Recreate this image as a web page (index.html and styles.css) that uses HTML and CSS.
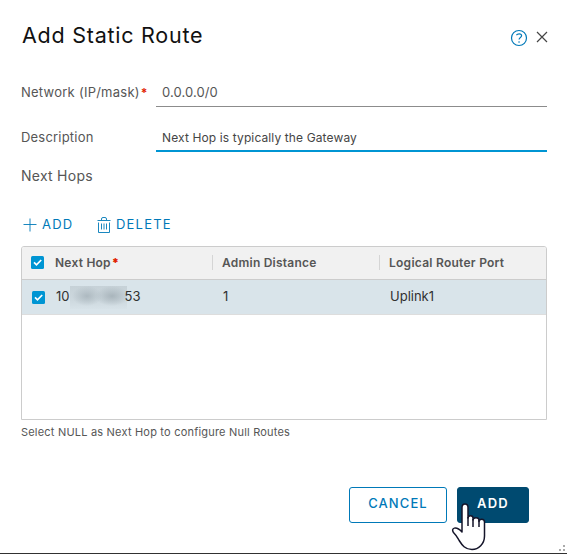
FILE: index.html
```html
<!DOCTYPE html>
<html lang="en">
<head>
<meta charset="utf-8">
<title>Add Static Route</title>
<link rel="stylesheet" href="styles.css">
</head>
<body>
<main class="dialog">
  <header class="header">
    <h1 class="title">Add Static Route</h1>
    <div class="header-icons">
      <svg class="help" width="18" height="18" viewBox="0 0 18 18"><circle cx="9" cy="9" r="7.5"/><path d="M6.4 6.2C7.2 5 8.2 4.8 9.2 4.8c1.5 0 2.4.8 2.4 2 0 1.700-2.500 1.700-2.500 3.700M8.200 13h1.700"/></svg>
      <svg class="close" width="12" height="12" viewBox="0 0 12 12"><path d="M1 1l10 10M11 1L1 11"/></svg>
    </div>
  </header>
  <div class="field">
    <label class="label"><span class="t-network">Network (IP/mask)</span><b class="star">*</b></label>
    <div class="input"><span class="t-ip">0.0.0.0/0</span></div>
  </div>
  <div class="field field-desc">
    <label class="label"><span class="t-desc">Description</span></label>
    <div class="input focused"><span class="t-value">Next Hop is typically the Gateway</span></div>
  </div>
  <h2 class="section"><span class="t-hops">Next Hops</span></h2>
  <div class="toolbar">
    <svg class="plus" width="14" height="14" viewBox="0 0 14 14"><path d="M7 .5v13M.5 6.500h13"/></svg>
    <span class="action t-add">ADD</span>
    <svg class="trash" width="14" height="16" viewBox="0 0 14 16"><path d="M.5 3.500h13M1.500 5.500v10h11v-10M4.500 3V2Q4.500.5 6 .5h2Q9.500.5 9.500 2v1M4.500 6.500v6M7 6.500v6M9.500 6.500v6"/></svg>
    <span class="action t-delete">DELETE</span>
  </div>
  <section class="grid">
    <div class="row head">
      <div class="cell first"><svg class="check" width="13" height="13" viewBox="0 0 13 13"><rect width="13" height="13" rx="1.500"/><path d="M3 6.300l2.500 2.500L10.200 4"/></svg><span class="t-hop">Next Hop</span><b class="star">*</b></div>
      <div class="cell second"><span class="t-admin">Admin Distance</span></div>
      <div class="cell third"><span class="t-port">Logical Router Port</span></div>
    </div>
    <div class="row body">
      <div class="cell first"><svg class="check" width="13" height="13" viewBox="0 0 13 13"><rect width="13" height="13" rx="1.500"/><path d="M3 6.300l2.500 2.500L10.200 4"/></svg><span class="t-ten">10</span><i class="redacted"></i><span class="t-end">53</span></div>
      <div class="cell second"><span>1</span></div>
      <div class="cell third"><span class="t-uplink">Uplink1</span></div>
    </div>
  </section>
  <p class="hint"><span class="t-hint">Select NULL as Next Hop to configure Null Routes</span></p>
  <footer class="footer">
    <button class="btn cancel"><span class="t-cancel">CANCEL</span></button>
    <button class="btn primary"><span class="t-primary">ADD</span></button>
  </footer>
  <svg class="grip" width="7" height="6" viewBox="0 0 7 6"><path d="M4 0h2v2H4zM0 4h2v2H0zM4 4h2v2H4z"/></svg>
  <svg class="pointer" width="38" height="49" viewBox="0 0 38 49"><path d="M11 28V5.500C11 .8 17 .8 17 5.500V16c0-3 5-3 5 0v2c0-3 6-3 6 0v1.500c0-3 5.500-3 5.500.5v14c0 8-6 13.500-12.500 13.500-7 0-10-4.500-12.500-8.500-2.500-4-3.500-6-6-8.500-3-4.500 2.500-7 8.500-.5z"/><path d="M17 15v9M22 17v8M28 18v7"/></svg>
</main>
</body>
</html>
```
FILE: styles.css
```css
* { box-sizing: border-box; }
body { margin: 0; font-family: Inter, "Open Sans", sans-serif; background: #fff; color: #565656; font-size: 13px; }
.dialog { position: relative; width: 567px; height: 554px; padding: 0 20px 0 21px; border-bottom: 1px solid #313131; overflow: hidden; }
span { white-space: nowrap; }
.header { height: 80px; padding: 20px 0 0 1px; display: flex; justify-content: space-between; }
.title { margin: 0; font-size: 21.5px; line-height: 30px; font-weight: 400; color: #111; letter-spacing: .75px; }
.header-icons { display: flex; gap: 8px; padding: 9px 0 0; margin-right: -1px; }
svg { fill: none; flex: none; }
.help { stroke: #0079b8; stroke-width: 1.200; }
.close { stroke: #454545; stroke-width: 1.200; margin-top: 2px; }
.field { display: flex; height: 27px; }
.field-desc { margin-top: 18px; }
.label { width: 135px; line-height: 25px; display: flex; letter-spacing: .2px; }
.t-network { letter-spacing: .25px; }
.star { color: #e12200; margin-left: 1px; font-size: 12px; letter-spacing: 0; }
.input { flex: 1; padding-left: 6px; border-bottom: 1px solid #8c8c8c; line-height: 25px; }
.t-ip { letter-spacing: .1px; }
.focused { border-bottom: 2px solid #0095d3; color: #454545; font-size: 12px; line-height: 26px; letter-spacing: .12px; }
.section { margin: 14px 0 0; font-size: 14px; font-weight: 400; line-height: 20px; letter-spacing: .25px; }
.toolbar { display: flex; align-items: center; height: 20px; margin: 29px 0 11px; padding-left: 2px; color: #0079b8; stroke: #0079b8; }
.action { stroke: none; font-size: 13px; letter-spacing: 1.2px; margin-top: -2px; }
.t-add { width: 33px; }
.plus { margin-right: 5px; stroke-width: .9; }
.trash { margin: -1px 5px 0 22px; stroke-width: .9; }
.grid { height: 174px; border: 1px solid #ccc; border-radius: 3px 3px 0 0; overflow: hidden; }
.row { display: grid; grid-template-columns: 190px 167px 1fr; align-items: center; }
.head { height: 33px; background: #f1f1f1; border-bottom: 1px solid #ccc; font-weight: 600; font-size: 12px; padding-bottom: 1px; }
.t-hop, .t-admin { letter-spacing: .23px; }
.t-port { letter-spacing: .26px; }
.body { height: 35px; background: #d9e4ea; border-bottom: 1px solid #ddd; color: #313131; }
.cell { display: flex; align-items: center; }
.cell span { position: relative; top: -1px; }
.head .cell span { top: 0; }
.first { padding-left: 9px; }
.body .first { padding-left: 10px; }
.check { margin-right: 11px; }
.check rect { fill: #0095d3; }
.check path { stroke: #fff; stroke-width: 1.700; }
.head .second, .head .third { height: 15px; border-left: 1px solid #d5d5d5; padding-left: 9px; }
.body .second, .body .third { padding-left: 11px; }
.t-end { margin-left: -2px; }
.redacted { width: 57px; height: 23px; background: radial-gradient(ellipse 15px 10px at 17px 10px, #adb9c0, transparent), radial-gradient(ellipse 17px 10px at 42px 10px, #a9b5bc, transparent), linear-gradient(#c6d1d7, #cdd8de 60%, #d7e2e8); }
.hint { margin: 4px 0 0; font-size: 11px; line-height: 17px; letter-spacing: .2px; }
.footer { display: flex; justify-content: flex-end; gap: 10px; margin-top: 46px; padding-right: 18px; }
.btn { height: 36px; padding: 0 0 4px; border: 1px solid #0079b8; border-radius: 3px; font: 500 13px Inter, sans-serif; }
.cancel { width: 98px; background: #fff; color: #0079b8; letter-spacing: 1.1px; }
.primary { width: 72px; background: #004a70; border-color: #004a70; color: #fff; font-weight: 600; letter-spacing: 1.3px; }
.grip { position: absolute; right: 1px; bottom: 2px; fill: #aaa; }
.pointer { position: absolute; left: 451px; top: 502px; fill: #fff; stroke: #15152a; stroke-width: 1.500; stroke-linejoin: round; }
```
